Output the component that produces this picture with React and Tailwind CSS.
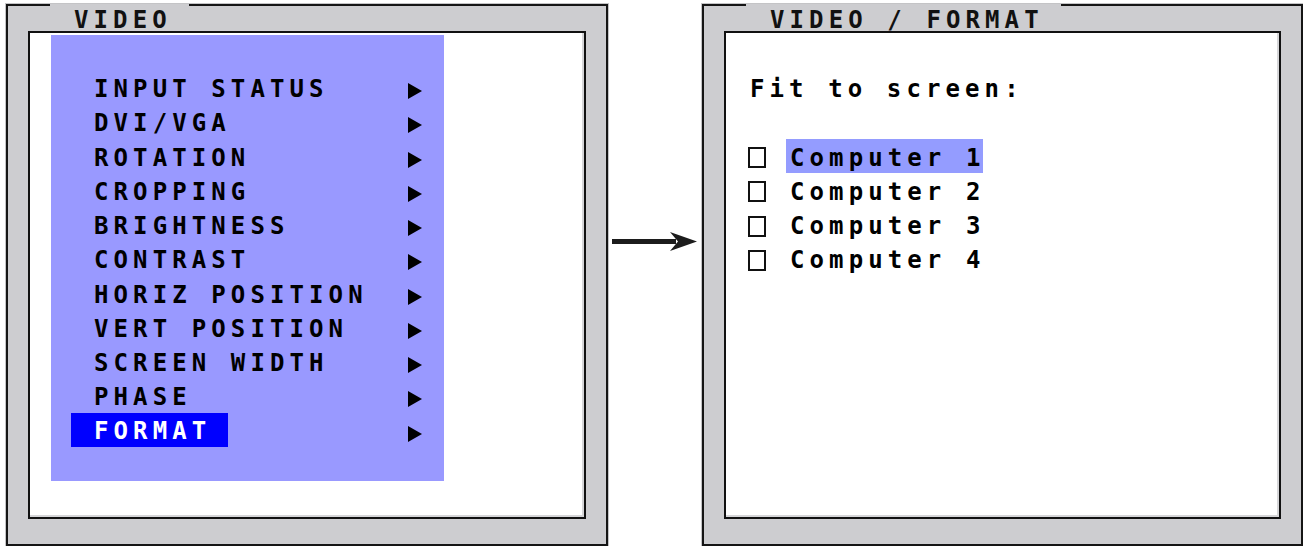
import React from "react";

const menu = [
  "INPUT STATUS",
  "DVI/VGA",
  "ROTATION",
  "CROPPING",
  "BRIGHTNESS",
  "CONTRAST",
  "HORIZ POSITION",
  "VERT POSITION",
  "SCREEN WIDTH",
  "PHASE",
  "FORMAT",
];

const font = "font-['DejaVu_Sans_Mono','Liberation_Mono',monospace] font-bold text-[24px] tracking-[5.1px]";

function Triangle() {
  return <span className="mt-[4px] w-0 h-0 border-y-[8px] border-y-transparent border-l-[14px] border-l-black" />;
}

function Frame({ title, tabWidth, children }) {
  return (
    <div className="relative mt-[4px] h-[542px] shrink-0 border-2 border-[#151515] bg-[#cdcdd0] pt-[25px] pl-[20px] pr-[20px] pb-[25px] ring-1 ring-[#c4c4c6]">
      <div
        className={`absolute left-[42px] top-[-2px] h-[27px] bg-[#cdcdd0] pl-[24px] pt-[5px] leading-[22px] text-[#111] whitespace-nowrap ${font}`}
        style={{ width: tabWidth }}
      >
        {title}
      </div>
      <div className="h-full border-2 border-[#111] bg-white shadow-[inset_-2px_-2px_0_#d6d6d8]">
        {children}
      </div>
    </div>
  );
}

export default function App() {
  return (
    <div className="w-[1303px] h-[546px] bg-white flex items-start overflow-hidden">
      <div className="ml-[6px] w-[602px] shrink-0">
        <Frame title="VIDEO" tabWidth={139}>
          <div className={`ml-[21px] mt-[2px] w-[393px] h-[446px] bg-[#9999ff] pt-[37px] ${font}`}>
            {menu.map((m) => {
              const sel = m === "FORMAT";
              return (
                <div key={m} className="flex items-center h-[34.25px] leading-[34.25px] pl-[20px]">
                  <span
                    className={
                      sel
                        ? "w-[157px] h-[34px] mb-[3px] pt-[1px] leading-[34px] pl-[23px] bg-[#0000ff] text-white whitespace-nowrap"
                        : "w-[157px] pl-[23px] text-black whitespace-nowrap"
                    }
                  >
                    {m}
                  </span>
                  <span className="ml-[180px] flex">
                    <Triangle />
                  </span>
                </div>
              );
            })}
          </div>
        </Frame>
      </div>

      <svg className="ml-[4px] mt-[231px] shrink-0" width="86" height="21" viewBox="0 0 86 21">
        <rect x="0" y="8" width="64" height="5" fill="#1c1c1c" />
        <path d="M58 1 L85 10.5 L58 20 Q63 14 66 10.5 Q63 7 58 1 Z" fill="#1c1c1c" />
      </svg>

      <div className="ml-[4px] w-[601px] shrink-0">
        <Frame title="VIDEO / FORMAT" tabWidth={315}>
          <div className={`pt-[39px] text-black ${font}`}>
            <div className="h-[34.25px] leading-[34.25px] pl-[24px] whitespace-nowrap">Fit to screen:</div>
            <div className="h-[34.25px]" />
            {[1, 2, 3, 4].map((n) => (
              <div key={n} className="flex items-center h-[34.25px] leading-[34.25px] pl-[22px]">
                <span className="w-[18px] h-[21px] border-2 border-[#111] bg-white shrink-0" />
                <span
                  className={
                    n === 1
                      ? "ml-[20px] w-[197px] h-[34px] mb-[4px] pt-[2px] leading-[34px] pl-[4px] bg-[#949cff] whitespace-nowrap"
                      : "ml-[20px] w-[197px] pl-[4px] whitespace-nowrap"
                  }
                >
                  Computer {n}
                </span>
              </div>
            ))}
          </div>
        </Frame>
      </div>
    </div>
  );
}
